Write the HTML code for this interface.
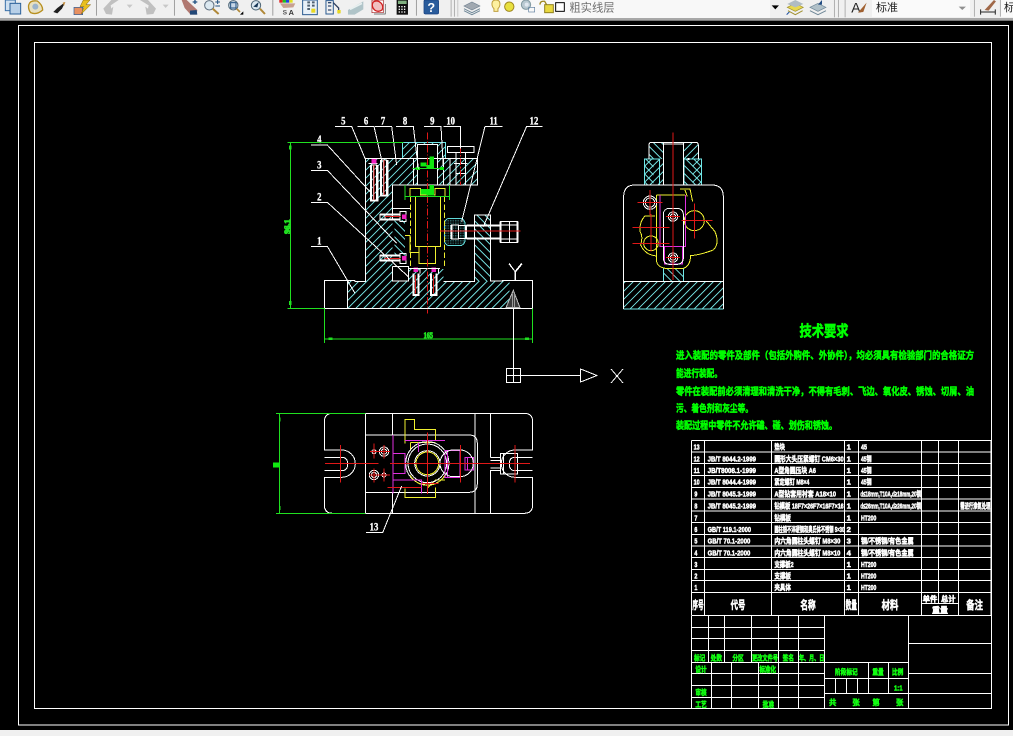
<!DOCTYPE html>
<html><head><meta charset="utf-8">
<style>
html,body{margin:0;padding:0;background:#f0f0f0;width:1013px;height:736px;overflow:hidden}
svg{display:block;position:absolute;left:0;top:0}
text{font-family:"Liberation Sans","Noto Sans CJK SC",sans-serif}
.cad{shape-rendering:crispEdges}
.w{stroke:#fff;fill:none;stroke-width:3}
.r{stroke:#e01818;fill:none;stroke-width:3}
.y{stroke:#f0f030;fill:none;stroke-width:3}
.m{stroke:#e030e0;fill:none;stroke-width:3}
.g{stroke:#20e020;fill:none;stroke-width:3}
.c{stroke:#70e8e8;fill:none;stroke-width:3}
.n{font-family:"Liberation Serif","Noto Serif CJK SC",serif;font-weight:bold;fill:#fff;stroke:#fff;stroke-width:1;font-size:34px;text-anchor:middle}
.t{fill:#0f0;stroke:#0f0;stroke-width:.5;font-weight:bold;font-size:10px}
.tw{fill:#fff;stroke:#fff;stroke-width:1.6;font-weight:bold;font-size:23px}
.tg{fill:#1f1;stroke:#1f1;stroke-width:1.6;font-weight:bold;font-size:22px;text-anchor:middle}
.th{fill:#fff;stroke:#fff;stroke-width:1.6;font-weight:bold;font-size:34px;text-anchor:middle}
</style></head>
<body>
<svg width="1013" height="736" viewBox="0 0 1013 736" xmlns="http://www.w3.org/2000/svg">
<defs>
<pattern id="h" class="cad" width="17" height="17" patternUnits="userSpaceOnUse" patternTransform="rotate(45)"><line x1="1" y1="0" x2="1" y2="17" stroke="#78e8e8" stroke-width="3"/></pattern>
<pattern id="h2" class="cad" width="17" height="17" patternUnits="userSpaceOnUse" patternTransform="rotate(-45)"><line x1="1" y1="0" x2="1" y2="17" stroke="#78e8e8" stroke-width="3"/></pattern>
<pattern id="hf" width="5" height="5" patternUnits="userSpaceOnUse"><rect width="2" height="2" fill="#60d8d8"/></pattern>
</defs>
<rect width="1013" height="736" fill="#f0f0f0"/>
<!-- toolbar -->
<rect x="480" y="0" width="290" height="18" fill="#f8f8f8"/>
<rect x="872" y="0" width="98" height="17" fill="#fafafa"/>
<rect x="1000" y="0" width="13" height="17" fill="#fafafa"/>
<rect x="0" y="18" width="1013" height="2" fill="#a8a8a8"/>
<g transform="scale(.3333)">
<rect x="16" y="0" width="30" height="32" fill="#cfe0f0" stroke="#3a70a8" stroke-width="3"/>
<rect x="30" y="10" width="32" height="32" fill="#b8d0e8" stroke="#2a6098" stroke-width="3"/>
<path d="M86 15Q90 0 112 3Q128 15 128 30Q110 46 92 38Q84 28 86 15Z" fill="#e8e0c0" stroke="#b89020" stroke-width="4"/>
<circle cx="106" cy="20" r="9" fill="#9cb4cc"/>
<path d="M160 36L172 24L196 6L186 26L172 40Z" fill="#202020"/><path d="M188 8L196 6L192 18Z" fill="#c89040"/>
<rect x="222" y="22" width="26" height="22" fill="#e89060" stroke="#2a60a0" stroke-width="2"/>
<path d="M250 0L270 0L258 14L272 14L244 42L252 20L240 20Z" fill="#e8c020" stroke="#806010" stroke-width="1.5"/>
<rect x="288" y="0" width="3" height="47" fill="#a0a0a0"/>
<path d="M318 42L310 26L334 0L356 0L332 16L334 26L340 20L336 44Z" fill="#c0c0c0"/>
<path d="M380 14H398L389 24Z" fill="#c8c8c8"/>
<path d="M460 42L468 26L444 0L420 0L446 16L444 26L436 20L440 44Z" fill="#c0c0c0"/>
<path d="M488 14H506L497 24Z" fill="#c8c8c8"/>
<rect x="522" y="0" width="3" height="47" fill="#a0a0a0"/>
<path d="M545 0L560 0L592 30L590 44H572L554 24Z" fill="#b07870"/><path d="M570 32L590 30L592 44H570Z" fill="#224878"/>
<path d="M578 6H592M585 0V12" stroke="#205080" stroke-width="4"/>
<circle cx="628" cy="16" r="14" fill="#dce8f0" stroke="#607080" stroke-width="3"/><path d="M638 26L656 42" stroke="#b08838" stroke-width="6"/>
<path d="M646 6H660M653 0V12M646 18H660" stroke="#205080" stroke-width="3"/>
<circle cx="700" cy="16" r="14" fill="#c8d8e8" stroke="#506878" stroke-width="3"/><rect x="692" y="8" width="16" height="16" fill="none" stroke="#205080" stroke-width="3"/>
<path d="M710 26L720 36" stroke="#b08838" stroke-width="5"/><path d="M720 44H730V34Z" fill="#000"/>
<circle cx="768" cy="16" r="14" fill="#dce8f0" stroke="#506878" stroke-width="3"/><path d="M760 20L776 6L772 22Z" fill="#183858"/><path d="M780 26L795 42" stroke="#b08838" stroke-width="6"/>
<rect x="817" y="0" width="3" height="47" fill="#a0a0a0"/>
<rect x="838" y="0" width="10" height="8" fill="#e02020"/><rect x="848" y="0" width="10" height="8" fill="#20c020"/><rect x="858" y="0" width="10" height="8" fill="#2040e0"/><rect x="868" y="0" width="10" height="8" fill="#e0e020"/>
<path d="M840 10H886L880 22L850 24Z" fill="#c8a090"/>
<text x="848" y="44" font-size="20" font-weight="bold" fill="#555" style="font-family:'Liberation Sans'">S</text><text x="866" y="45" font-size="22" font-weight="bold" fill="#333" style="font-family:'Liberation Sans'">A</text>
<rect x="908" y="0" width="44" height="44" fill="#e8f0f8" stroke="#2a5a90" stroke-width="3"/>
<path d="M922 4H930V10H922ZM936 4H944V10H936ZM922 14H930V20H922ZM936 14H944V20H936ZM922 24H930V30H922Z" fill="#506070"/><rect x="934" y="26" width="12" height="12" fill="#e8d820"/>
<path d="M978 2H1000V42H978Z" fill="#f0f0f0" stroke="#2a5a90" stroke-width="3"/><path d="M984 8H994M984 18H994M984 30H994" stroke="#304a70" stroke-width="4"/><path d="M1000 8L1016 24V40" stroke="#304060" stroke-width="4" fill="none"/><rect x="1012" y="30" width="10" height="10" fill="#e8d820"/>
<path d="M1044 30L1090 4V28L1064 44H1044Z" fill="#b0c4c8"/><path d="M1050 28L1086 10" stroke="#e8f0f0" stroke-width="5"/>
<path d="M1116 0H1150V38H1116Z" fill="#fff" stroke="#a02020" stroke-width="2"/><path d="M1120 6Q1132 -2 1144 10Q1152 20 1146 30Q1134 38 1124 30Q1112 18 1120 6Z" fill="#f0c0c0" stroke="#d02020" stroke-width="4"/><path d="M1156 12V42H1122" stroke="#505050" stroke-width="2" fill="none"/>
<rect x="1190" y="0" width="34" height="44" fill="#101010"/><rect x="1194" y="2" width="26" height="10" fill="#80b080"/><path d="M1196 18H1200V22H1196ZM1204 18H1208V22H1204ZM1212 18H1216V22H1212ZM1196 26H1200V30H1196ZM1204 26H1208V30H1204ZM1212 26H1216V30H1212ZM1196 34H1200V38H1196ZM1204 34H1208V38H1204ZM1212 34H1216V38H1212Z" fill="#fff"/>
<rect x="1248" y="0" width="3" height="47" fill="#a0a0a0"/>
<rect x="1272" y="0" width="44" height="42" rx="4" fill="#2a5c9c" stroke="#184080" stroke-width="2"/>
<text x="1294" y="36" font-size="38" font-weight="bold" fill="#fff" text-anchor="middle" style="font-family:'Liberation Sans'">?</text>
<rect x="1352" y="0" width="3" height="50" fill="#b0b0b0"/><rect x="1362" y="0" width="3" height="50" fill="#b0b0b0"/><rect x="1372" y="0" width="3" height="50" fill="#c8c8c8"/>
<path d="M1392 18L1416 6L1440 18L1416 30Z" fill="#a0a8b0" stroke="#708090" stroke-width="2"/><path d="M1392 26L1416 38L1440 26M1392 32L1416 44L1440 32" fill="none" stroke="#708898" stroke-width="3"/>
<path d="M1476 12Q1476 0 1488 0Q1500 0 1500 12Q1500 20 1494 26V34H1482V26Q1476 20 1476 12Z" fill="#fdf0a0" stroke="#c0a040" stroke-width="3"/>
<circle cx="1528" cy="20" r="14" fill="#e8e040" stroke="#a08820" stroke-width="3"/>
</g>
<g transform="translate(510,0) scale(.3333)">
<circle cx="48" cy="14" r="14" fill="#b8c8d0" stroke="#8098a0" stroke-width="3"/><circle cx="50" cy="14" r="6" fill="#e0e8f0"/><rect x="56" y="22" width="18" height="14" fill="none" stroke="#6080a0" stroke-width="2"/>
<path d="M90 14Q90 2 104 4L112 18" fill="none" stroke="#a08820" stroke-width="4"/><rect x="104" y="14" width="26" height="24" fill="#e8d840" stroke="#908020" stroke-width="3"/>
<rect x="137" y="8" width="26" height="26" fill="#fff" stroke="#000" stroke-width="3"/>
<text x="178" y="34" font-size="34" fill="#707070">粗实线层</text>
<path d="M785 16H807L796 28Z" fill="#000"/>
<path d="M832 22L856 10L880 22L856 34Z" fill="#e8d850" stroke="#a09030" stroke-width="2"/><path d="M832 12L856 0L880 12L856 22Z" fill="#b0bcc4"/><path d="M834 32L856 44L878 32" fill="none" stroke="#a09030" stroke-width="3"/><path d="M830 44L838 36" stroke="#2050a0" stroke-width="3"/>
<path d="M900 22L924 10L948 22L924 34Z" fill="#b0c0c8" stroke="#708898" stroke-width="2"/><path d="M900 32L924 44L948 32" fill="none" stroke="#708898" stroke-width="3"/><path d="M924 14L936 0V14Z" fill="#204a80"/>
<rect x="972" y="0" width="3" height="52" fill="#b0b0b0"/><rect x="984" y="0" width="3" height="52" fill="#b0b0b0"/><rect x="1004" y="0" width="3" height="52" fill="#b0b0b0"/>
<text x="1024" y="38" font-size="42" fill="#222" style="font-family:'Liberation Sans'">A</text><path d="M1044 38L1070 8L1060 36Z" fill="#a06030"/>
<text x="1098" y="33" font-size="33" fill="#222">标准</text>
<path d="M1346 20H1368L1357 30Z" fill="#909090"/>
<rect x="1392" y="0" width="3" height="50" fill="#b0b0b0"/>
<path d="M1412 36H1456M1412 28V44M1456 28V44" stroke="#222" stroke-width="3" fill="none"/><path d="M1424 30L1452 0L1458 4L1436 32Z" fill="#a06848"/>
<rect x="1470" y="0" width="3" height="50" fill="#b0b0b0"/>
<text x="1482" y="33" font-size="33" fill="#222">标</text>
</g>
<!-- canvas -->
<rect x="0" y="20.5" width="1013" height="709.5" fill="#000"/>
<g class="cad">
<rect x="18.5" y="25.5" width="990" height="699.5" fill="none" stroke="#fff"/>
<rect x="34.5" y="42.5" width="957" height="666" fill="none" stroke="#fff"/>

<!-- front view -->
<g transform="translate(270,105) scale(.3333)">
<polygon points="233,610 233,528 287,528 287,160 623,160 623,240 367,240 367,528 718,528 718,610" fill="url(#h)" stroke="none"/>
<polygon points="397,160 397,112 527,112 527,160" fill="url(#h)"/>
<rect x="613" y="330" width="49" height="198" fill="url(#h2)"/>
<rect x="373" y="345" width="34" height="107" fill="url(#h2)"/>
<rect x="405" y="240" width="120" height="290" fill="#000"/>
<rect x="443" y="118" width="60" height="122" fill="#000"/>
<rect x="367" y="240" width="53" height="70" fill="#000"/>
<rect x="367" y="484" width="48" height="45" fill="#000"/>
<rect x="415" y="492" width="105" height="38" fill="url(#h)"/>
<rect x="523" y="340" width="62" height="82" rx="16" fill="url(#hf)" stroke="#60d8d8" stroke-width="3"/>
<path class="c" d="M287 160V240M287 160H623V240H520M397 160V112H527V160"/>
<path class="w" d="M163 610V526H255M255 526V529H287V160M287 160H623V240H367V310H420M367 240V310M367 484V528H415V484H367M520 530H613V330H662V528H697V526H788V610H163M367 310V345M662 528M233 528V610"/>
<path class="w" d="M405 240H520M443 118H503V240H443ZM430 160V240M520 160V240M430 160H520"/>
<!-- T bolt -->
<path class="w" d="M532 125H612V143H532ZM572 125V143M558 143V175M587 143V175M552 175H592M558 175V240H587V175M558 205H587"/>
<path class="w" d="M540 160V240"/>
<!-- bolts -->
<path class="w" d="M305 180H320V285H305ZM310 180V285M335 165H350V272H335ZM340 165V272M295 175H322M330 328H390V343H330ZM345 328V343M390 320H408V350H390ZM330 452H390V467H330ZM345 452V467M390 445H408V475H390ZM425 490H450V505M478 490H505V505"/>
<path class="w" style="stroke-width:6" d="M303 180V287H322V180M333 165V272H352V165M430 505V570H445V505M483 505V570H500V505M330 328H390M330 343H390M330 452H390M330 467H390"/>
<g fill="#f020c0"><rect x="305" y="162" width="14" height="13"/><rect x="396" y="328" width="14" height="14"/><rect x="396" y="453" width="14" height="14"/><rect x="430" y="488" width="14" height="13"/><rect x="484" y="488" width="14" height="13"/></g>
<path class="r" d="M312 180V285M342 165V270M345 335H392M345 460H392M437 510V565M491 510V565"/>
<!-- yellow -->
<path class="y" d="M436 275V425H512V275M447 425V475H497V425M420 275V250H452V270H495V250H525V275H420M405 392H420V442H447"/>
<path class="y" stroke-dasharray="16 8" d="M422 275V490H420M523 275V490"/>
<path class="w" d="M415 490H510"/>
<path class="r" stroke-dasharray="22 6 4 6" d="M472 82V625"/>
<path class="r" stroke-dasharray="20 5 5 5" d="M572 125V240"/>
<!-- green details -->
<path class="g" d="M428 190H520M405 240V285M538 240V285M405 275H538"/>
<path fill="#10e810" d="M452 172H470V180H478V155H492V190H470V184H452ZM452 252H478V240H492V272H470V268H452Z"/>
<rect x="438" y="186" width="12" height="9" fill="#10e810"/><rect x="510" y="186" width="12" height="9" fill="#10e810"/>
<!-- screw -->
<path class="w" d="M590 362H692V400H590ZM545 360H565V402H545ZM565 362H587V400H565ZM692 350H742V412H692ZM692 360H742M692 402H742M718 350V412"/>
<path class="w" style="stroke-width:6" d="M590 362H692M590 400H692M545 360V402M692 350V412M742 350V412"/>
<path class="r" d="M510 378H752"/>
<!-- leaders -->
<path class="w" d="M195 64H245L287 165M262 64H312L335 165M315 64H365L380 180M378 64H430L445 190M462 64H513L520 185M520 64H572V130M645 64H698M645 64L575 350M770 64H818M770 64L640 365M123 120H172L300 260M123 196H172L380 415M123 292H172L415 515M123 424H172L255 565"/>
<g>
<text class="n" x="220" y="58" textLength="13" lengthAdjust="spacingAndGlyphs">5</text><text class="n" x="288" y="58" textLength="13" lengthAdjust="spacingAndGlyphs">6</text><text class="n" x="339" y="58" textLength="13" lengthAdjust="spacingAndGlyphs">7</text><text class="n" x="405" y="58" textLength="13" lengthAdjust="spacingAndGlyphs">8</text><text class="n" x="487" y="58" textLength="13" lengthAdjust="spacingAndGlyphs">9</text><text class="n" x="542" y="58" textLength="26" lengthAdjust="spacingAndGlyphs">10</text><text class="n" x="671" y="58" textLength="24" lengthAdjust="spacingAndGlyphs">11</text><text class="n" x="792" y="58" textLength="26" lengthAdjust="spacingAndGlyphs">12</text>
<text class="n" x="148" y="114" textLength="13" lengthAdjust="spacingAndGlyphs">4</text><text class="n" x="148" y="191" textLength="13" lengthAdjust="spacingAndGlyphs">3</text><text class="n" x="148" y="287" textLength="13" lengthAdjust="spacingAndGlyphs">2</text><text class="n" x="148" y="419" textLength="13" lengthAdjust="spacingAndGlyphs">1</text>
</g>
<!-- dims -->
<path class="g" d="M52 112H400M61 112V610M52 610H163M163 610V714M788 610V714M163 702H788"/>
<rect x="57" y="122" width="8" height="12" fill="#20e020"/><rect x="57" y="588" width="8" height="12" fill="#20e020"/><rect x="175" y="698" width="12" height="7" fill="#20e020"/><rect x="765" y="698" width="12" height="7" fill="#20e020"/>
<text x="0" y="0" transform="translate(60,365) rotate(-90)" text-anchor="middle" fill="#20e020" stroke="#20e020" stroke-width="3" font-weight="bold" font-size="25" style="font-family:'Liberation Serif'">96.1</text>
<text x="475" y="699" text-anchor="middle" fill="#20e020" stroke="#20e020" stroke-width="2.5" font-weight="bold" font-size="24" textLength="28" lengthAdjust="spacingAndGlyphs" style="font-family:'Liberation Serif'">165</text>
<!-- ucs base -->
<path d="M730 556L708 608H750Z" fill="#3a3a3a" stroke="#bbb" stroke-width="3"/>
<path d="M727 566V606M733 566V606" stroke="#999" stroke-width="3"/>
<path class="w" d="M718 475L735 500L755 475M735 500V526M730 610V800"/>
</g>

<!-- UCS icon -->
<g stroke="#fff" fill="none">
<path d="M513.5 308V368M520 375.5H580M580.5 369L597 375.5L580.5 382Z"/>
<rect x="506.5" y="368.5" width="14" height="14"/>
<path d="M513.5 368.5V382.5M506.5 375.5H520.5"/>
<path d="M611 369L623 383M623 369L611 383"/>
<path d="M509 264L515.5 272L522 264M515.5 272V280"/>
</g>

<!-- side view -->
<g transform="translate(600,130) scale(.3333)">
<rect x="147" y="37" width="43" height="50" fill="url(#h2)"/><rect x="250" y="37" width="45" height="50" fill="url(#h)"/>
<rect x="133" y="87" width="57" height="78" fill="url(#h)"/><rect x="133" y="87" width="28" height="78" fill="url(#h2)"/><rect x="250" y="87" width="55" height="78" fill="url(#h2)"/><rect x="278" y="87" width="27" height="78" fill="url(#h)"/>
<rect x="71" y="455" width="299" height="82" fill="url(#h)"/><rect x="190" y="415" width="60" height="40" fill="url(#h2)"/>
<path class="c" d="M133 87H178V165H133ZM252 87H305V165H252ZM190 415V455M250 415V455M71 537H370"/>
<path class="w" d="M155 37H287Q295 37 295 45V87M155 37Q147 37 147 45V87M190 42H250V165H190ZM71 537V200Q71 165 105 165H335Q370 165 370 200V537M71 455H370M190 42V37M250 42V37"/>
<path class="y" d="M170 195H255M170 195V395Q172 410 195 415H250Q270 410 272 377Q300 375 340 360Q360 340 345 305L318 272M165 258H135Q118 275 120 305Q130 320 122 345Q135 375 170 378M240 177H270L278 215M255 180L262 200"/>
<circle class="y" cx="283" cy="272" r="30"/><circle class="y" cx="153" cy="340" r="22"/>
<path class="m" d="M180 195V350H257V195M193 350H247V402H193Z"/>
<rect class="w" x="190" y="235" width="60" height="168" rx="18"/>
<circle class="w" cx="150" cy="218" r="20"/><circle class="w" cx="150" cy="218" r="14"/>
<circle class="w" cx="219" cy="260" r="14"/><circle class="w" cx="219" cy="260" r="8"/><circle class="w" cx="219" cy="383" r="14"/><circle class="w" cx="219" cy="383" r="8"/>
<path class="r" d="M219 7V450M113 218H188M150 180V255M98 292H208M153 252V335M98 340H208M153 315V365M245 272H338M283 220V325M198 260H240M198 383H240"/>
<rect x="262" y="84" width="6" height="6" fill="#fff"/>
</g>

<!-- plan view -->
<g transform="translate(265,400) scale(.3333)">
<path class="w" d="M302 40H778Q803 40 803 65V150H750A41 41 0 0 0 750 232H803V315Q803 340 778 340H203Q178 340 178 315V232H230A41 41 0 0 0 230 150H178V65Q178 40 203 40H302"/>
<path class="w" d="M178 172H230Q248 172 248 192Q248 212 230 212H178M803 172H750Q733 172 733 192Q733 212 750 212H803"/>
<path class="w" d="M302 40V340M382 40V105M382 277V340M630 40V340M677 40V172M677 210V340M302 105H612Q637 105 637 130V252Q637 277 612 277H302M677 172H707M677 181H707M677 204H707M677 212H707M707 160H757V222H707ZM715 160V222"/>
<path class="g" d="M33 40H302M33 340H302M43 40V340"/>
<rect x="24" y="187" width="20" height="16" fill="#10e810"/>
<rect x="42" y="52" width="5" height="12" fill="#20e020"/><rect x="42" y="318" width="5" height="12" fill="#20e020"/>
<path class="y" d="M420 130V58H448V88H512V122M420 265V292H512V262M436 128H512M436 128V150M540 240H512L488 264"/>
<circle class="w" cx="487" cy="190" r="38"/><circle class="w" cx="487" cy="190" r="58"/><circle class="w" cx="487" cy="190" r="65"/>
<circle class="y" cx="487" cy="190" r="34"/>
<path class="y" d="M435 225A60 60 0 0 0 540 225"/>
<path class="m" d="M384 105V280M384 160H420V220H384ZM384 240H470V280M420 122H540M540 152H585V232H540ZM548 152V232M600 172H625V210H600ZM608 172V210M460 128V156"/>
<path class="w" d="M585 150A40 40 0 0 1 585 230H565A40 40 0 0 1 565 150Z"/>
<circle class="w" cx="357" cy="155" r="14"/><circle class="w" cx="357" cy="155" r="8"/><circle class="w" cx="327" cy="225" r="14"/><circle class="w" cx="327" cy="225" r="8"/><circle class="w" cx="327" cy="155" r="6"/><circle class="w" cx="357" cy="225" r="6"/>
<path class="r" d="M180 190H340M375 190H795M227 135V248M750 135V248M587 135V248M487 98V282M327 130V175M357 135V175M327 205V248M357 205V245M315 155H375M312 225H375M368 262H470M470 250H520"/>
<path class="w" d="M303 398H353L410 258"/>
<text class="n" x="327" y="391" textLength="26" lengthAdjust="spacingAndGlyphs">13</text>
</g>

<!-- tech notes -->
<text x="824" y="336" text-anchor="middle" fill="#0f0" stroke="#0f0" stroke-width=".6" font-weight="bold" font-size="15" textLength="49" lengthAdjust="spacingAndGlyphs">技术要求</text>
<text class="t" x="676" y="359" textLength="298" lengthAdjust="spacingAndGlyphs">进入装配的零件及部件（包括外购件、外协件），均必须具有检验部门的合格证方</text>
<text class="t" x="676" y="377" textLength="46" lengthAdjust="spacingAndGlyphs">能进行装配。</text>
<text class="t" x="676" y="395" textLength="298" lengthAdjust="spacingAndGlyphs">零件在装配前必须清理和清洗干净，不得有毛刺、飞边、氧化皮、锈蚀、切屑、油</text>
<text class="t" x="676" y="412" textLength="77" lengthAdjust="spacingAndGlyphs">污、着色剂和灰尘等。</text>
<text class="t" x="676" y="429" textLength="161" lengthAdjust="spacingAndGlyphs">装配过程中零件不允许磕、碰、划伤和锈蚀。</text>

<!-- parts table -->
<g transform="translate(685,435) scale(.3333)">
<path class="w" d="M20 16V540M58 16V540M260 16V540M478 16V540M520 16V540M710 16V540M760 16V505M820 16V540M918 16V540"/>
<path class="w" d="M20 16H918M20 51H918M20 86H918M20 121H918M20 157H918M20 192H918M20 228H918M20 263H918M20 298H918M20 333H918M20 368H918M20 403H918M20 437H918M20 472H918M710 505H820"/>
<g class="tw">
<text x="26" y="44" textLength="18" lengthAdjust="spacingAndGlyphs">13</text><text x="26" y="79" textLength="18" lengthAdjust="spacingAndGlyphs">12</text><text x="26" y="114" textLength="18" lengthAdjust="spacingAndGlyphs">11</text><text x="26" y="149" textLength="18" lengthAdjust="spacingAndGlyphs">10</text><text x="28" y="185" textLength="9" lengthAdjust="spacingAndGlyphs">9</text><text x="28" y="220" textLength="9" lengthAdjust="spacingAndGlyphs">8</text><text x="28" y="256" textLength="9" lengthAdjust="spacingAndGlyphs">7</text><text x="28" y="291" textLength="9" lengthAdjust="spacingAndGlyphs">6</text><text x="28" y="326" textLength="9" lengthAdjust="spacingAndGlyphs">5</text><text x="28" y="361" textLength="9" lengthAdjust="spacingAndGlyphs">4</text><text x="28" y="396" textLength="9" lengthAdjust="spacingAndGlyphs">3</text><text x="28" y="430" textLength="9" lengthAdjust="spacingAndGlyphs">2</text><text x="28" y="465" textLength="9" lengthAdjust="spacingAndGlyphs">1</text>
<text x="68" y="79" textLength="145" lengthAdjust="spacingAndGlyphs">JB/T 8044.2-1999</text><text x="68" y="114" textLength="145" lengthAdjust="spacingAndGlyphs">JB/T8008.1-1999</text><text x="68" y="149" textLength="145" lengthAdjust="spacingAndGlyphs">JB/T 8044.4-1999</text><text x="68" y="185" textLength="145" lengthAdjust="spacingAndGlyphs">JB/T 8045.3-1999</text><text x="68" y="220" textLength="145" lengthAdjust="spacingAndGlyphs">JB/T 8045.2-1999</text>
<text x="68" y="291" textLength="130" lengthAdjust="spacingAndGlyphs">GB/T 119.1-2000</text><text x="68" y="326" textLength="128" lengthAdjust="spacingAndGlyphs">GB/T 70.1-2000</text><text x="68" y="361" textLength="128" lengthAdjust="spacingAndGlyphs">GB/T 70.1-2000</text>
<text x="268" y="44" textLength="32" lengthAdjust="spacingAndGlyphs">垫块</text>
<text x="268" y="79" textLength="208" lengthAdjust="spacingAndGlyphs">圆形大头压紧螺钉 CM6×30</text>
<text x="268" y="114" textLength="125" lengthAdjust="spacingAndGlyphs">A型角圆压块 A6</text>
<text x="268" y="149" textLength="105" lengthAdjust="spacingAndGlyphs">紧定螺钉 M8×4</text>
<text x="268" y="185" textLength="185" lengthAdjust="spacingAndGlyphs">A型钻套用衬套 A18×10</text>
<text x="268" y="220" textLength="208" lengthAdjust="spacingAndGlyphs">钻模板 18F7×26F7×16F7×16</text>
<text x="268" y="256" textLength="50" lengthAdjust="spacingAndGlyphs">钻模板</text>
<text x="268" y="291" textLength="210" lengthAdjust="spacingAndGlyphs">圆柱销不淬硬钢和奥氏体不锈钢 5×30</text>
<text x="268" y="326" textLength="198" lengthAdjust="spacingAndGlyphs">内六角圆柱头螺钉 M8×30</text>
<text x="268" y="361" textLength="198" lengthAdjust="spacingAndGlyphs">内六角圆柱头螺钉 M8×10</text>
<text x="268" y="396" textLength="58" lengthAdjust="spacingAndGlyphs">支撑板2</text><text x="268" y="430" textLength="50" lengthAdjust="spacingAndGlyphs">支撑板</text><text x="268" y="465" textLength="50" lengthAdjust="spacingAndGlyphs">夹具体</text>
<text x="485" y="44">1</text><text x="485" y="79">1</text><text x="485" y="114">1</text><text x="485" y="149">1</text><text x="485" y="185">1</text><text x="485" y="220">1</text><text x="485" y="256">1</text><text x="485" y="291">2</text><text x="485" y="326">3</text><text x="485" y="361">4</text><text x="485" y="396">1</text><text x="485" y="430">1</text><text x="485" y="465">1</text>
<text x="528" y="44" textLength="18" lengthAdjust="spacingAndGlyphs">45</text><text x="528" y="79" textLength="32" lengthAdjust="spacingAndGlyphs">45钢</text><text x="528" y="114" textLength="32" lengthAdjust="spacingAndGlyphs">45钢</text><text x="528" y="149" textLength="32" lengthAdjust="spacingAndGlyphs">45钢</text>
<text x="526" y="185" textLength="182" lengthAdjust="spacingAndGlyphs">d≤18mm,T10A,d≥18mm,20钢</text><text x="526" y="220" textLength="182" lengthAdjust="spacingAndGlyphs">d≤26mm,T10A,d≥26mm,20钢</text>
<text x="528" y="256" textLength="46" lengthAdjust="spacingAndGlyphs">HT200</text><text x="528" y="326" textLength="158" lengthAdjust="spacingAndGlyphs">钢/不锈钢/有色金属</text><text x="528" y="361" textLength="158" lengthAdjust="spacingAndGlyphs">钢/不锈钢/有色金属</text>
<text x="528" y="396" textLength="46" lengthAdjust="spacingAndGlyphs">HT200</text><text x="528" y="430" textLength="46" lengthAdjust="spacingAndGlyphs">HT200</text><text x="528" y="465" textLength="46" lengthAdjust="spacingAndGlyphs">HT200</text>
<text x="826" y="220" textLength="90" lengthAdjust="spacingAndGlyphs">需进行渗氮处理</text>
</g>
<text class="th" x="39" y="522" textLength="34" lengthAdjust="spacingAndGlyphs">序号</text>
<text class="th" x="159" y="522" textLength="44" lengthAdjust="spacingAndGlyphs">代号</text><text class="th" x="369" y="522" textLength="46" lengthAdjust="spacingAndGlyphs">名称</text>
<text class="th" x="499" y="522" textLength="34" lengthAdjust="spacingAndGlyphs">数量</text>
<text class="th" x="615" y="522" textLength="50" lengthAdjust="spacingAndGlyphs">材料</text>
<text class="th" x="869" y="522" textLength="50" lengthAdjust="spacingAndGlyphs">备注</text>
<text class="th" x="735" y="499" style="font-size:22px">单件</text><text class="th" x="790" y="499" style="font-size:22px">总计</text><text class="th" x="765" y="534" style="font-size:24px">重量</text>
</g>

<!-- title block -->
<g transform="translate(685,610) scale(.3333)">
<path class="w" d="M20 16V295M920 16V295M418 16V295M670 16V295M20 16H920M20 52H418M20 86H418M20 122H418M20 157H670M20 190H418M20 226H418M20 262H418M70 16V157M118 16V157M199 16V157M280 16V157M340 16V157M80 157V295M140 157V295M220 157V295M280 157V295M340 157V295M418 205H670M418 250H670M550 157V250M610 157V250M451 205V250M484 205V250M517 205V250M670 100H920M670 190H920M670 250H920"/>
<g class="tg">
<text x="44" y="151" textLength="34" lengthAdjust="spacingAndGlyphs">标记</text><text x="94" y="151" textLength="34" lengthAdjust="spacingAndGlyphs">处数</text><text x="159" y="151" textLength="34" lengthAdjust="spacingAndGlyphs">分区</text><text x="240" y="151" textLength="78" lengthAdjust="spacingAndGlyphs">更改文件号</text><text x="310" y="151" textLength="34" lengthAdjust="spacingAndGlyphs">签名</text><text x="380" y="151" textLength="76" lengthAdjust="spacingAndGlyphs">年、月、日</text>
<text x="48" y="186" textLength="34" lengthAdjust="spacingAndGlyphs">设计</text><text x="248" y="186" textLength="50" lengthAdjust="spacingAndGlyphs">标准化</text><text x="48" y="255" textLength="34" lengthAdjust="spacingAndGlyphs">审核</text><text x="48" y="291" textLength="34" lengthAdjust="spacingAndGlyphs">工艺</text><text x="250" y="291" textLength="34" lengthAdjust="spacingAndGlyphs">批准</text>
<text x="484" y="193" textLength="68" lengthAdjust="spacingAndGlyphs">阶段标记</text><text x="579" y="193" textLength="34" lengthAdjust="spacingAndGlyphs">重量</text><text x="638" y="193" textLength="34" lengthAdjust="spacingAndGlyphs">比例</text><text x="640" y="241" textLength="26" lengthAdjust="spacingAndGlyphs">1:1</text>
<text x="443" y="285">共</text><text x="513" y="285">张</text><text x="573" y="285">第</text><text x="644" y="285">张</text>
</g>
</g>
</g>
</svg>
</body></html>
